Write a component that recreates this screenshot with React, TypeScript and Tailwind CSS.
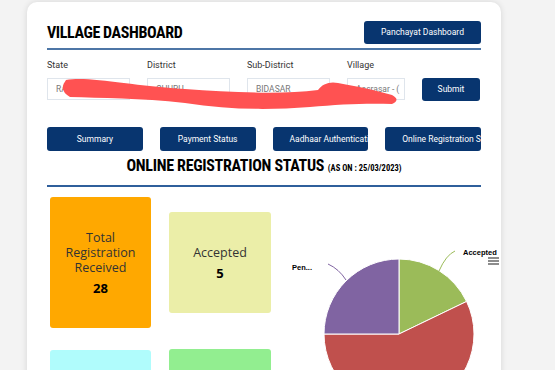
import React from 'react';

const navy = 'bg-[#08356f]';

function Field({ label, value, width, colWidth }: { label: string; value: string; width: string; colWidth: string }) {
  return (
    <div className={`flex flex-col ${colWidth}`}>
      <div className="text-[9px] leading-[11px] text-[#333]">{label}</div>
      <div
        className={`mt-[7px] h-[22px] ${width} border border-[#dfe5ec] bg-white pl-[8px] text-[8.5px] leading-[20px] text-[#777] overflow-hidden whitespace-nowrap`}
      >
        {value}
      </div>
    </div>
  );
}

function Tab({ label }: { label: string }) {
  return (
    <div
      className={`${navy} h-[24px] rounded-[3px] px-[17px] text-center text-[8.5px] leading-[24px] text-white overflow-hidden whitespace-nowrap`}
    >
      {label}
    </div>
  );
}

function StatCard({ lines, count, color, size }: { lines: string[]; count: number; color: string; size: string }) {
  return (
    <div className={`${color} ${size} rounded-[3px] flex flex-col items-center justify-center text-[#333] font-['Open_Sans',sans-serif]`}>
      {lines.map((l) => (
        <div key={l} className="text-[12.5px] leading-[15px]">
          {l}
        </div>
      ))}
      <div className="mt-[6px] text-[13px] leading-[15px] font-bold text-black">{count}</div>
    </div>
  );
}

function PieChart() {
  // 5 accepted, 16 rejected, 7 pending out of 28
  return (
    <svg width="209" height="190" viewBox="0 0 209 190" className="overflow-visible">
      <path d="M128,137 L128,62 A75,75 0 0 1 195.57,104.46 Z" fill="#9bbb59" stroke="#fff" strokeWidth="1" />
      <path d="M128,137 L195.57,104.46 A75,75 0 1 1 53,137 Z" fill="#c0504d" stroke="#fff" strokeWidth="1" />
      <path d="M128,137 L53,137 A75,75 0 0 1 128,62 Z" fill="#8064a2" stroke="#fff" strokeWidth="1" />
      <path d="M168,74 Q175,58 184,54" fill="none" stroke="#9bbb59" strokeWidth="1" />
      <path d="M57,67 Q68,72 75,83" fill="none" stroke="#8064a2" strokeWidth="1" />
      <text x="192" y="58" fontSize="7.5" fontWeight="bold" fill="#000" fontFamily="Liberation Sans, sans-serif">
        Accepted
      </text>
      <text x="21" y="73" fontSize="7.5" fontWeight="bold" fill="#000" fontFamily="Liberation Sans, sans-serif">
        Pen...
      </text>
      <g stroke="#666" strokeWidth="1.5">
        <line x1="217" y1="61" x2="228" y2="61" />
        <line x1="217" y1="64" x2="228" y2="64" />
        <line x1="217" y1="67" x2="228" y2="67" />
      </g>
    </svg>
  );
}

export default function App() {
  return (
    <div className="relative h-[370px] w-[555px] overflow-hidden bg-[#f3f3f3] font-['Roboto',sans-serif]">
      <div className="ml-[27px] mt-[2px] w-[474px] rounded-[10px] bg-white px-[20px] pt-[19px] pb-[40px] shadow-[0_0_6px_rgba(0,0,0,0.12)]">
        {/* Header */}
        <div className="flex items-center justify-between">
          <h1 className="font-['Roboto_Condensed','Liberation_Sans_Narrow','Roboto',sans-serif] font-stretch-condensed text-[16px] tracking-[-0.4px] font-bold leading-[20px] text-black">
            VILLAGE DASHBOARD
          </h1>
          <div className={`${navy} h-[23px] w-[117px] rounded-[3px] text-center text-[8.5px] leading-[23px] text-white`}>
            Panchayat Dashboard
          </div>
        </div>
        <div className="mt-[4px] h-[2px] bg-[#4d76a6]" />

        {/* Filters */}
        <div className="mt-[10px] flex items-end">
          <Field label="State" value="RAJASTHAN" width="w-[83px]" colWidth="w-[100px]" />
          <Field label="District" value="CHURU" width="w-[83px]" colWidth="w-[100px]" />
          <Field label="Sub-District" value="BIDASAR" width="w-[83px]" colWidth="w-[100px]" />
          <Field label="Village" value="Aasrasar - (" width="w-[58px]" colWidth="w-[75px]" />
          <div className={`${navy} mb-[-1px] h-[23px] w-[58px] rounded-[3px] text-center text-[8.5px] leading-[23px] text-white`}>
            Submit
          </div>
        </div>

        {/* Tabs */}
        <div className="mt-[27px] grid grid-cols-4 gap-[17px]">
          <Tab label="Summary" />
          <Tab label="Payment Status" />
          <Tab label="Aadhaar Authentication" />
          <Tab label="Online Registration Status" />
        </div>

        {/* Section heading */}
        <div className="mt-[5px] text-center font-['Roboto_Condensed','Liberation_Sans_Narrow','Roboto',sans-serif] font-stretch-condensed font-bold leading-[20px] text-black">
          <span className="text-[16px] tracking-[-0.3px]">ONLINE REGISTRATION STATUS</span>{' '}
          <span className="text-[8.5px]">(AS ON : 25/03/2023)</span>
        </div>
        <div className="mt-[7px] h-[2px] bg-[#2f5f9b]" />

        {/* Stats + chart */}
        <div className="mt-[10px] flex">
          <div className="w-[224px] pl-[3px]">
            <div className="flex items-center gap-[18px]">
              <StatCard lines={['Total', 'Registration', 'Received']} count={28} color="bg-[#ffa800]" size="w-[101px] h-[131px]" />
              <StatCard lines={['Accepted']} count={5} color="bg-[#ebeea8]" size="w-[102px] h-[101px]" />
            </div>
            <div className="mt-[22px] flex items-start gap-[18px]">
              <div className="h-[101px] w-[101px] rounded-[3px] bg-[#b0fcfc]" />
              <div className="-mt-[1px] h-[101px] w-[102px] rounded-[3px] bg-[#92ee90]" />
            </div>
          </div>
          <PieChart />
        </div>
      </div>

      {/* red scribble drawn over the form values */}
      <svg className="pointer-events-none absolute left-0 top-0" width="555" height="370">
        <path
          d="M66,80 C90,76 130,86 185,89 C230,92 280,95 318,90 C322,84 330,81 338,83 C355,86 375,90 392,95 Q401,100 392,104 C370,103 340,104 310,107 C270,110 230,110 185,103 C140,98 100,98 70,97 Q58,90 66,80 Z"
          fill="#ff5252"
        />
      </svg>
    </div>
  );
}
